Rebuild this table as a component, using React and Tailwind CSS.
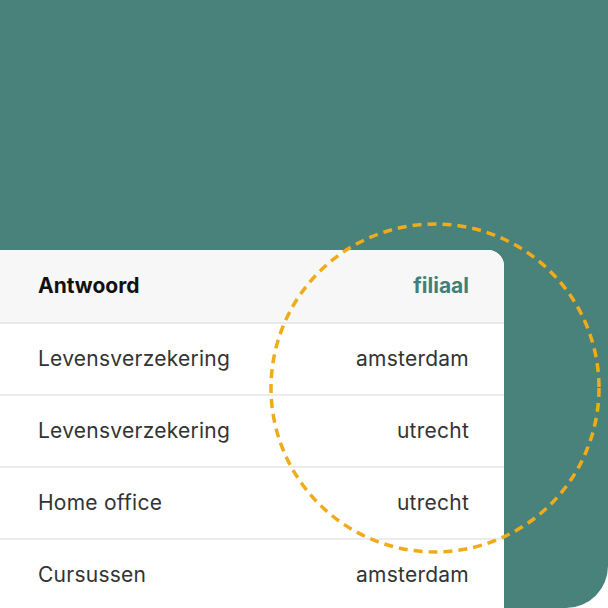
import React from 'react';

const rows = [
  { a: 'Levensverzekering', f: 'amsterdam' },
  { a: 'Levensverzekering', f: 'utrecht' },
  { a: 'Home office', f: 'utrecht' },
  { a: 'Cursussen', f: 'amsterdam' },
];

export default function App() {
  return (
    <div className="relative w-[608px] h-[608px] overflow-hidden bg-white" style={{ fontFamily: 'Inter, "Noto Sans", sans-serif' }}>
      <div className="w-full h-full bg-[#48827a] rounded-br-[42px] pt-[250px]">
        {/* table card */}
        <div className="w-[504px] bg-white rounded-tr-[16px] overflow-hidden">
          <div className="flex items-center justify-between h-[74px] pl-[38px] pr-[35px] bg-[#f7f7f7] border-b-2 border-[#e9e9e9]">
            <span className="text-[21px] font-bold text-[#111]">Antwoord</span>
            <span className="text-[21px] font-bold text-[#3f8078]">filiaal</span>
          </div>
          {rows.map((r, i) => (
            <div key={i} className="flex items-center justify-between h-[72px] pl-[38px] pr-[35px] bg-white border-b-2 border-[#ececec]">
              <span className="text-[21px] tracking-[0.25px] text-[#333]">{r.a}</span>
              <span className="text-[21px] tracking-[0.25px] text-[#333]">{r.f}</span>
            </div>
          ))}
        </div>
      </div>

      {/* dashed circle */}
      <svg className="absolute left-0 top-0 pointer-events-none" width="608" height="608" viewBox="0 0 608 608">
        <circle cx="435" cy="388" r="164" fill="none" stroke="#f0ab1a" strokeWidth="3.5" strokeDasharray="9 6" />
      </svg>
    </div>
  );
}
